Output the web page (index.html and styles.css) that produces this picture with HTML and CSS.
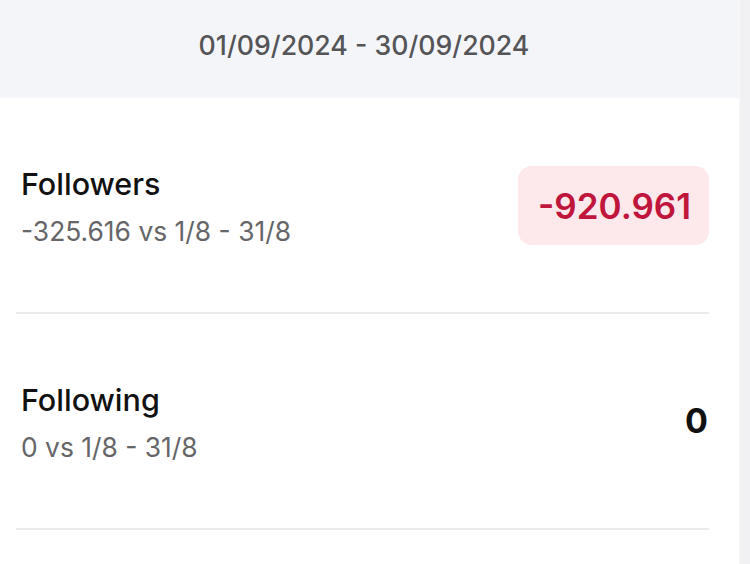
FILE: index.html
```html
<!DOCTYPE html>
<html lang="en">
<head>
    <meta charset="UTF-8">
    <meta name="viewport" content="width=device-width, initial-scale=1.0">
    <title>Followers report</title>
    <link rel="stylesheet" href="styles.css">
</head>
<body>
    <div class="page">
        <div class="main">
            <div class="period">01/09/2024 - 30/09/2024</div>

            <div class="stat">
                <div class="stat_info">
                    <div class="stat_title">Followers</div>
                    <div class="stat_compare">-325.616 vs 1/8 - 31/8</div>
                </div>
                <div class="stat_value negative">-920.961</div>
            </div>

            <div class="stat">
                <div class="stat_info">
                    <div class="stat_title">Following</div>
                    <div class="stat_compare">0 vs 1/8 - 31/8</div>
                </div>
                <div class="stat_value">0</div>
            </div>
        </div>
        <div class="gutter"></div>
    </div>
</body>
</html>
```

FILE: styles.css
```css
body {
    margin: 0;
    background: #fff;
    font-family: Inter, "Noto Sans", sans-serif;
    color: #111;
}
.page {
    display: flex;
    height: 564px;
    overflow: hidden;
}
.main {
    flex: 1;
}
.gutter {
    width: 10px;
    background: #f1f1f3;
    border-left: 1px solid #f7f7f8;
}
.period {
    background: #f4f5f9;
    height: 98px;
    box-sizing: border-box;
    padding: 0 11px 8px 0;
    display: flex;
    align-items: center;
    justify-content: center;
    font-size: 26.7px;
    font-weight: 500;
    color: #555558;
}
.stat {
    display: flex;
    align-items: center;
    justify-content: space-between;
    margin: 0 30px 0 16px;
    padding: 0 0 0 5px;
    height: 214px;
    border-bottom: 2px solid #ebebed;
}
.stat_info {
    margin-top: 2px;
}
.stat_title {
    font-size: 30.5px;
    line-height: 36px;
    font-weight: 500;
    color: #111;
    margin-bottom: 13px;
}
.stat_compare {
    font-size: 26.4px;
    line-height: 32px;
    color: #666669;
}
.stat_value {
    font-size: 34px;
    line-height: 42px;
    font-weight: 700;
    color: #111;
    padding: 0 1px;
}
.stat_value.negative {
    font-size: 35px;
    font-weight: 600;
    background: #fde8ec;
    color: #c0163c;
    border-radius: 14px;
    padding: 19px 18px 18px 20px;
    margin-top: 1px;
}
```
